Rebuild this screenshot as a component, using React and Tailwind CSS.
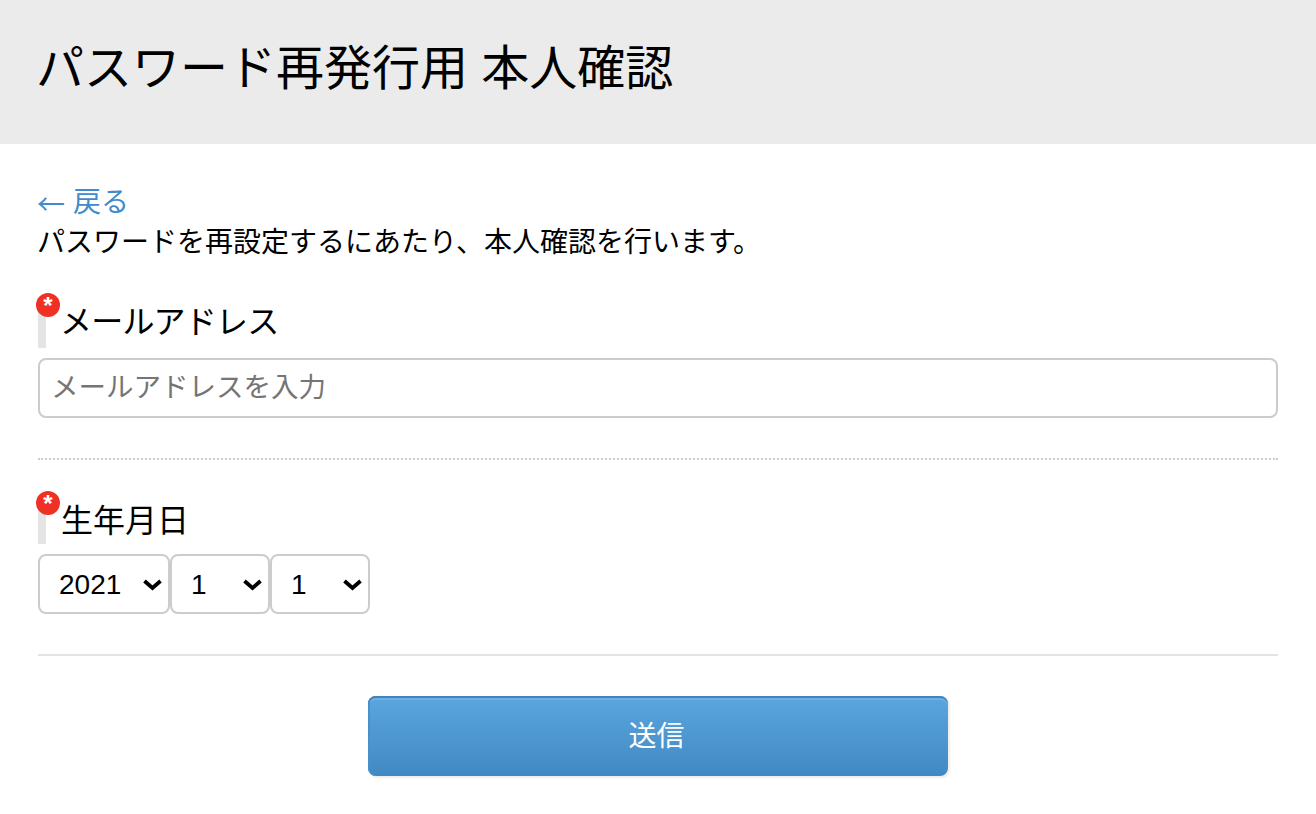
import { useState } from "react";

const font = "font-['Liberation_Sans','Noto_Sans_CJK_JP',sans-serif]";

const FieldLabel = ({ children, className = "" }) => {
  return (
    <div className={`relative flex items-start text-[32px] text-black border-l-[8px] border-[#e4e4e4] ${className}`}>
      {/* required mark */}
      <span className="absolute left-[-10px] top-[-19px] flex h-[24px] w-[24px] items-start justify-center rounded-full bg-[#ee3124] text-[24px] font-bold leading-[25px] tracking-normal text-white">
        *
      </span>
      {children}
    </div>
  );
};

const DateSelect = ({ options, value, onChange, className = "" }) => {
  return (
    <div className={`relative h-[60px] ${className}`}>
      <select
        value={value}
        onChange={(e) => onChange(e.target.value)}
        className="h-full w-full appearance-none rounded-[8px] border-2 border-[#cccccc] bg-white pl-[19px] pt-[2px] text-[28px] text-black outline-none"
      >
        {options.map((o) => (
          <option key={o} value={o}>
            {o}
          </option>
        ))}
      </select>
      <svg viewBox="0 0 19 13" className="pointer-events-none absolute right-[8px] top-[24px] h-[13px] w-[19px]">
        <path d="M1.5 3 L9.5 10 L17.5 3" fill="none" stroke="#000" strokeWidth="3.8" />
      </svg>
    </div>
  );
};

const App = () => {
  const [email, setEmail] = useState("");
  const [year, setYear] = useState("2021");
  const [month, setMonth] = useState("1");
  const [day, setDay] = useState("1");

  return (
    <div className={`min-h-[814px] bg-white ${font}`}>
      <header className="flex h-[144px] items-center bg-[#ebebeb] pb-[6px] pl-[36px] pr-[38px]">
        <h1 className="text-[48px] font-normal leading-[48px] text-black">パスワード再発行用 本人確認</h1>
      </header>

      <main className="px-[38px] pt-[39px]">
        <a href="#" className="flex items-center text-[28px] leading-[40px] text-[#428bca]">
          <span className="font-['Noto_Sans_CJK_JP'] -ml-[1px]">←</span>
          <span className="ml-[8px]">戻る</span>
        </a>
        <p className="-ml-[1px] text-[28px] leading-[40px] text-black">パスワードを再設定するにあたり、本人確認を行います。</p>

        {/* mail */}
        <FieldLabel className="mt-[49px] h-[36px] pl-[14px] leading-[21px] tracking-[-0.8px]">メールアドレス</FieldLabel>
        <input
          type="text"
          value={email}
          onChange={(e) => setEmail(e.target.value)}
          placeholder="メールアドレスを入力"
          className="mt-[10px] block h-[60px] w-full rounded-[8px] border-2 border-[#cccccc] bg-white px-[11px] text-[27.5px] outline-none placeholder:text-[#757575]"
        />
        <div className="mt-[40px] border-t-2 border-dotted border-[#cccccc]" />

        {/* birthday */}
        <FieldLabel className="mt-[50px] h-[34px] pl-[15px] leading-[23px]">生年月日</FieldLabel>
        <div className="mt-[10px] flex">
          <DateSelect className="w-[132px]" options={["2020", "2021", "2022"]} value={year} onChange={setYear} />
          <DateSelect className="w-[100px]" options={["1", "2", "3"]} value={month} onChange={setMonth} />
          <DateSelect className="w-[100px]" options={["1", "2", "3"]} value={day} onChange={setDay} />
        </div>
        <div className="mt-[40px] border-t-2 border-[#e4e4e4]" />

        <div className="mt-[40px] flex justify-center">
          <button className="h-[80px] w-[580px] rounded-[8px] bg-gradient-to-b from-[#5ba6df] to-[#4189c2] pr-[3px] pt-[2px] text-[28px] text-white shadow-[inset_0_2px_0_#3f85bb,inset_2px_0_0_#4b90c8,inset_0_4px_0_rgba(255,255,255,0.12),2px_2px_2px_rgba(0,0,0,0.07)]">
            送信
          </button>
        </div>
      </main>
    </div>
  );
};

export default App;
